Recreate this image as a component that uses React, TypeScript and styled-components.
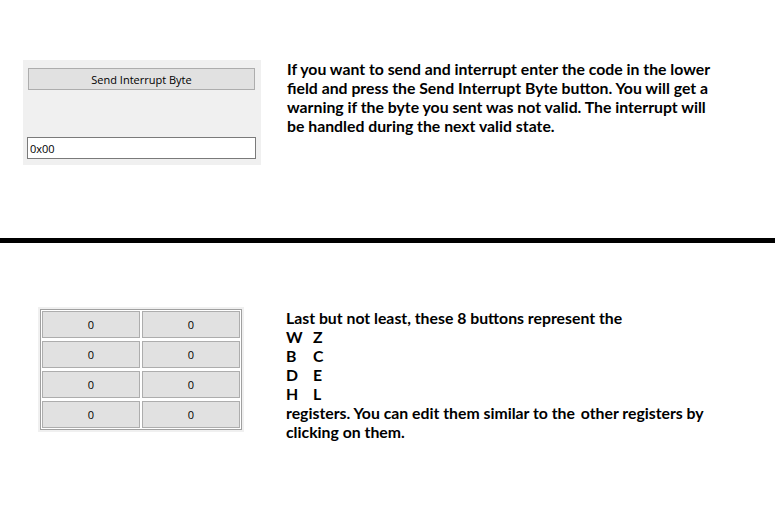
import React from "react";
import styled, { createGlobalStyle } from "styled-components";

const Global = createGlobalStyle`
  html, body { margin: 0; padding: 0; background: #ffffff; }
  body { width: 775px; height: 505px; overflow: hidden; }
`;

const Page = styled.div`
  width: 775px;
  display: flex;
  flex-direction: column;
`;

const Section = styled.section<{ $h: number; $pt: number; $pl: number; $gap: number }>`
  height: ${(p) => p.$h}px;
  box-sizing: border-box;
  padding: ${(p) => p.$pt}px 0 0 ${(p) => p.$pl}px;
  display: flex;
  align-items: flex-start;
  gap: ${(p) => p.$gap}px;
`;

const Divider = styled.div`
  height: 5px;
  background: #000;
  width: 100%;
`;

const Panel = styled.div`
  width: 238px;
  height: 105px;
  background: #f0f0f0;
  box-sizing: border-box;
  padding: 8px 6px 6px 4px;
  display: flex;
  flex-direction: column;
  justify-content: space-between;
`;

const WinButton = styled.button`
  font-family: "Open Sans", "Noto Sans", sans-serif;
  font-size: 11px;
  color: #000;
  background: #e1e1e1;
  border: 1px solid #adadad;
  margin: 0 0 0 1px;
  padding: 0;
  height: 22px;
  width: 227px;
  display: flex;
  align-items: center;
  justify-content: center;
`;

const Field = styled.input`
  font-family: "Open Sans", "Noto Sans", sans-serif;
  font-size: 11px;
  color: #000;
  background: #fff;
  border: 1px solid #7a7a7a;
  height: 22px;
  width: 229px;
  box-sizing: border-box;
  padding: 0 2px;
  outline: none;
`;

const Desc = styled.div<{ $mt: number }>`
  font-family: "Lato", "Liberation Sans", sans-serif;
  font-weight: 700;
  font-size: 15.8px;
  line-height: 19px;
  color: #000;
  width: 430px;
  margin-top: ${(p) => p.$mt}px;
`;

const Line = styled.div``;

const Reg = styled.span`
  display: inline-block;
  width: 27px;
`;

const Frame = styled.div`
  background: #f0f0f0;
  padding: 2px;
`;

const Grid = styled.div`
  display: grid;
  grid-template-columns: 98px 98px;
  grid-auto-rows: 27px;
  column-gap: 2px;
  row-gap: 3px;
  border: 1px solid #a0a0a0;
  background: #fff;
  padding: 1px;
`;

const Cell = styled.button`
  font-family: "Open Sans", "Noto Sans", sans-serif;
  font-size: 11px;
  color: #000;
  background: #e1e1e1;
  border: 1px solid #adadad;
  margin: 0;
  padding: 0;
  display: flex;
  align-items: center;
  justify-content: center;
`;

const regs: [string, string][] = [
  ["W", "Z"],
  ["B", "C"],
  ["D", "E"],
  ["H", "L"],
];

export default function App() {
  return (
    <Page>
      <Global />
      <Section $h={238} $pt={60} $pl={23} $gap={26}>
        <Panel>
          <WinButton>Send Interrupt Byte</WinButton>
          <Field defaultValue="0x00" />
        </Panel>
        <Desc $mt={-1}>
          If you want to send and interrupt enter the code in the lower field and press the
          Send Interrupt Byte button. You will get a warning if the byte you sent was not
          valid. The interrupt will be handled during the next valid state.
        </Desc>
      </Section>
      <Divider />
      <Section $h={262} $pt={64} $pl={38} $gap={42}>
        <Frame>
          <Grid>
            {Array.from({ length: 8 }).map((_, i) => (
              <Cell key={i}>0</Cell>
            ))}
          </Grid>
        </Frame>
        <Desc $mt={1}>
          <Line>Last but not least, these 8 buttons represent the</Line>
          {regs.map(([a, b]) => (
            <Line key={a}>
              <Reg>{a}</Reg>
              {b}
            </Line>
          ))}
          <Line>
            {"registers. You can edit them similar to the\u2009 other registers by clicking on them."}
          </Line>
        </Desc>
      </Section>
    </Page>
  );
}
